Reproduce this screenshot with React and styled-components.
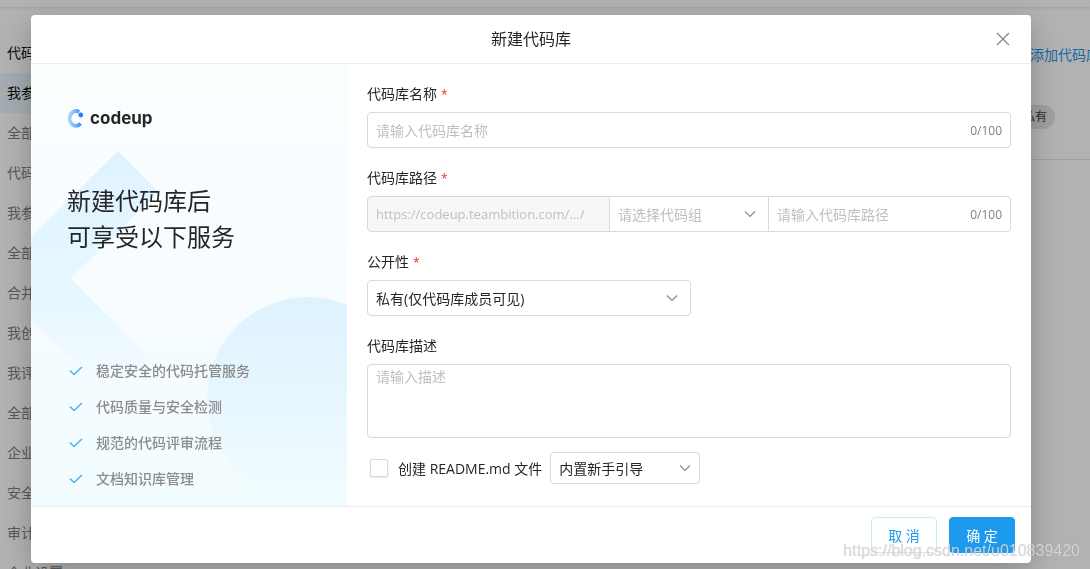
import React, { useState } from "react";
import styled, { createGlobalStyle } from "styled-components";

const GlobalStyle = createGlobalStyle`
    * {
        box-sizing: border-box;
    }
    body {
        margin: 0;
        overflow: hidden;
        background-color: #fff;
    }
    body, input, select, textarea, button {
        font-family: "Open Sans", "Noto Sans CJK SC", sans-serif;
        font-size: 14px;
        color: #262626;
    }
`;

/* page behind the dialog */
const Page = styled.div`
    display: flex;
    flex-direction: column;
    height: 100vh;
    overflow: hidden;
`;
const TopBar = styled.div`
    flex: none;
    height: 7px;
    box-shadow: 0 1px 3px rgba(0, 0, 0, 0.12);
`;
const Columns = styled.div`
    display: flex;
    flex: 1;
    min-height: 0;
`;
const SideNav = styled.nav`
    width: 220px;
    padding-top: 26px;
`;
const SideItem = styled.a`
    display: block;
    padding-left: 7px;
    line-height: 40px;
    text-decoration: none;
    color: ${({ $strong }) => ($strong ? "#111" : "#808080")};
    background-color: ${({ $active }) => ($active ? "#ebf7fe" : "transparent")};
`;
const Main = styled.main`
    flex: 1;
    margin-right: -24px;
`;
const MainHeader = styled.div`
    display: flex;
    justify-content: flex-end;
    padding: 36px 14px 0;
`;
const AddLink = styled.a`
    line-height: 24px;
    text-decoration: none;
    color: #1b9aee;
`;
const RepoRow = styled.div`
    display: flex;
    justify-content: flex-end;
    margin-top: 38px;
    padding: 0 59px 30px;
    border-bottom: 1px solid #e5e5e5;
`;
const Tag = styled.span`
    padding: 0 8px;
    border-radius: 12px;
    line-height: 24px;
    font-size: 12px;
    background-color: #e5e5e5;
    color: #404040;
`;

/* dialog */
const Mask = styled.div`
    position: fixed;
    inset: 0;
    display: flex;
    align-items: flex-start;
    padding: 15px 59px 6px 31px;
    background-color: rgba(0, 0, 0, 0.3);
`;
const Dialog = styled.form`
    flex: 1;
    border-radius: 4px;
    background-color: #fff;
    box-shadow: 0 8px 30px rgba(0, 0, 0, 0.25);
`;
const DialogHeader = styled.header`
    display: grid;
    grid-template-columns: 1fr auto 1fr;
    align-items: center;
    padding: 12px 20px;
    border-bottom: 1px solid #ececec;
`;
const DialogTitle = styled.h2`
    grid-column: 2;
    margin: 0;
    font-size: 16px;
    line-height: 24px;
    font-weight: 400;
`;
const CloseButton = styled.button`
    display: flex;
    justify-self: end;
    padding: 0;
    border: none;
    background: none;
    cursor: pointer;
`;
const DialogBody = styled.div`
    display: flex;
`;
const DialogFooter = styled.footer`
    display: flex;
    justify-content: flex-end;
    gap: 12px;
    padding: 10px 16px;
    border-top: 1px solid #ececec;
`;
const Button = styled.button`
    min-width: 66px;
    height: 36px;
    padding: 0 16px 1px;
    border: 1px solid ${({ $primary }) => ($primary ? "#1b9aee" : "#c6eafc")};
    border-radius: 4px;
    background-color: ${({ $primary }) => ($primary ? "#1b9aee" : "#fff")};
    color: ${({ $primary }) => ($primary ? "#fff" : "#1b9aee")};
    cursor: pointer;
`;

/* left promo panel */
const Promo = styled.aside`
    position: relative;
    display: flex;
    flex-direction: column;
    justify-content: space-between;
    width: 316px;
    padding: 42px 36px 9px;
    overflow: hidden;
    background: linear-gradient(#fafeff, #f7fcff 50%, #f1fcff);
`;
const PromoArt = styled.svg`
    position: absolute;
    top: 0;
    left: 0;
`;
const PromoTop = styled.div`
    position: relative;
`;
const Brand = styled.div`
    display: flex;
    align-items: center;
    gap: 5px;
    font-family: Inter, sans-serif;
    font-size: 17px;
    line-height: 24px;
    font-weight: 700;
`;
const PromoTitle = styled.h3`
    margin: 53px 0 0;
    font-size: 24px;
    line-height: 36px;
    font-weight: 400;
`;
const PromoList = styled.ul`
    position: relative;
    margin: 0;
    padding: 0;
    list-style: none;
`;
const PromoItem = styled.li`
    display: flex;
    align-items: center;
    gap: 13px;
    padding-left: 2px;
    line-height: 36px;
    font-weight: 500;
    color: #8c8c8c;
`;

/* form */
const Fields = styled.div`
    flex: 1;
    padding: 16px 20px 22px;
`;
const Field = styled.div`
    margin-bottom: ${({ $last }) => ($last ? "14px" : "16px")};
`;
const Label = styled.label`
    display: block;
    margin-bottom: 4px;
    line-height: 28px;
`;
const Required = styled.span`
    margin-left: 4px;
    font-size: 12px;
    line-height: 1;
    color: #f5301c;
`;
const InputBox = styled.div`
    display: flex;
    align-items: center;
    flex: 1;
    height: 36px;
    padding: 0 8px;
    border: 1px solid #d9d9d9;
    border-radius: ${({ $radius }) => $radius || "4px"};
    background-color: ${({ $disabled }) => ($disabled ? "#f7f7f7" : "#fff")};
`;
const Input = styled.input`
    flex: 1;
    min-width: 0;
    padding: 0;
    border: none;
    outline: none;
    background: none;
    &::placeholder {
        color: #bfbfbf;
    }
    &:disabled {
        font-size: 13px;
        color: #bfbfbf;
    }
`;
const Counter = styled.span`
    font-size: 12px;
    color: #808080;
`;
const PathGroup = styled.div`
    display: flex;
    & > * + * {
        margin-left: -1px;
    }
`;
const SelectBox = styled.div`
    display: grid;
    align-items: center;
    width: ${({ $width }) => $width};
    svg {
        grid-area: 1 / 1;
        justify-self: end;
        margin-right: ${({ $small }) => ($small ? "9px" : "13px")};
        pointer-events: none;
    }
`;
const SelectInput = styled.select`
    grid-area: 1 / 1;
    appearance: none;
    width: 100%;
    height: ${({ $small }) => ($small ? "32px" : "36px")};
    padding: 0 32px 0 8px;
    border: 1px solid #d9d9d9;
    border-radius: ${({ $square }) => ($square ? "0" : "4px")};
    background-color: #fff;
    color: ${({ $empty }) => ($empty ? "#bfbfbf" : "#262626")};
`;
const TextArea = styled.textarea`
    display: block;
    width: 100%;
    height: 74px;
    padding: 0 8px;
    border: 1px solid #d9d9d9;
    border-radius: 4px;
    line-height: 24px;
    resize: none;
    &::placeholder {
        color: #bfbfbf;
    }
`;
const ReadmeRow = styled.div`
    display: flex;
    align-items: center;
    gap: 8px;
    padding-left: 3px;
`;
const CheckLabel = styled.label`
    display: flex;
    align-items: center;
    gap: 10px;
`;
const Checkbox = styled.input`
    appearance: none;
    width: 18px;
    height: 18px;
    margin: 0;
    border: 1px solid #d9d9d9;
    border-radius: 2px;
    background-color: #fff;
    box-shadow: 0 1px 2px rgba(0, 0, 0, 0.1);
    &:checked {
        background-color: #1b9aee;
    }
`;
const Watermark = styled.div`
    position: fixed;
    right: 10px;
    bottom: 8px;
    font-family: "Liberation Sans", sans-serif;
    font-size: 16px;
    line-height: 20px;
    color: rgba(222, 222, 222, 0.85);
    text-shadow: 0 0 1px rgba(120, 120, 120, 0.4);
    pointer-events: none;
`;

const navItems = [
    { text: "代码库", strong: true },
    { text: "我参与的", strong: true, active: true },
    { text: "全部" },
    { text: "代码组" },
    { text: "我参与的" },
    { text: "全部" },
    { text: "合并请求" },
    { text: "我创建的" },
    { text: "我评审的" },
    { text: "全部" },
    { text: "企业" },
    { text: "安全" },
    { text: "审计" },
    { text: "企业设置" },
];

const services = [
    "稳定安全的代码托管服务",
    "代码质量与安全检测",
    "规范的代码评审流程",
    "文档知识库管理",
];

const Chevron = () => (
    <svg width="12" height="8" viewBox="0 0 12 8" fill="none" stroke="#8c8c8c" strokeWidth="1.2">
        <path d="M1 1.5L6 6.5L11 1.5" />
    </svg>
);

const CheckIcon = () => (
    <svg width="14" height="10" viewBox="0 0 14 10" fill="none" stroke="#4db3f5" strokeWidth="1.5">
        <path d="M1 4.5L5 8.5L13 1" />
    </svg>
);

const Logo = () => (
    <svg width="18" height="20" viewBox="0 0 18 20" fill="none">
        <defs>
            <linearGradient id="ring" x1="0" y1="0" x2="1" y2="0">
                <stop offset="0" stopColor="#a8d3fd" />
                <stop offset="0.4" stopColor="#7fbcfc" />
                <stop offset="1" stopColor="#3d94fb" />
            </linearGradient>
        </defs>
        <path d="M12.2 4A6.4 7.4 0 1 0 13.6 15.6" stroke="url(#ring)" strokeWidth="3.8" />
        <circle cx="13.8" cy="7" r="2.4" fill="#1f80ff" />
    </svg>
);

const Art = () => (
    <PromoArt width="316" height="442" viewBox="0 0 316 442" aria-hidden="true">
        <defs>
            <linearGradient id="ribbon" x1="0" y1="87" x2="0" y2="320" gradientUnits="userSpaceOnUse">
                <stop offset="0" stopColor="#dff3ff" />
                <stop offset="0.65" stopColor="#e7f7ff" />
                <stop offset="1" stopColor="#f4fcff" />
            </linearGradient>
            <linearGradient id="disc" x1="0" y1="0" x2="0" y2="1">
                <stop offset="0" stopColor="#def2fe" />
                <stop offset="0.5" stopColor="#e7f6ff" />
                <stop offset="1" stopColor="#f1fcff" />
            </linearGradient>
        </defs>
        <path d="M87 87L128 128L40 214L144 320H64L-42 214Z" fill="url(#ribbon)" />
        <circle cx="277" cy="334" r="101" fill="url(#disc)" />
    </PromoArt>
);

const Select = ({ width, children, ...props }) => (
    <SelectBox $width={width} $small={props.$small}>
        <SelectInput {...props}>{children}</SelectInput>
        <Chevron />
    </SelectBox>
);

const Background = () => (
    <Page>
        <TopBar />
        <Columns>
            <SideNav>
                {navItems.map((item, i) => (
                    <SideItem key={i} href="#" $strong={item.strong} $active={item.active}>
                        {item.text}
                    </SideItem>
                ))}
            </SideNav>
            <Main>
                <MainHeader>
                    <AddLink href="#">添加代码库</AddLink>
                </MainHeader>
                <RepoRow>
                    <Tag>私有</Tag>
                </RepoRow>
            </Main>
        </Columns>
    </Page>
);

const App = () => {
    const [name, setName] = useState("");
    const [path, setPath] = useState("");

    return (
        <>
            <GlobalStyle />
            <Background />
            <Mask>
                <Dialog role="dialog" aria-labelledby="title" onSubmit={(e) => e.preventDefault()}>
                    <DialogHeader>
                        <DialogTitle id="title">新建代码库</DialogTitle>
                        <CloseButton type="button" aria-label="关闭">
                            <svg width="16" height="16" viewBox="0 0 16 16" stroke="#8c8c8c" strokeWidth="1.4">
                                <path d="M2 2L14 14M14 2L2 14" />
                            </svg>
                        </CloseButton>
                    </DialogHeader>
                    <DialogBody>
                        <Promo>
                            <Art />
                            <PromoTop>
                                <Brand>
                                    <Logo />
                                    codeup
                                </Brand>
                                <PromoTitle>
                                    新建代码库后
                                    <br />
                                    可享受以下服务
                                </PromoTitle>
                            </PromoTop>
                            <PromoList>
                                {services.map((text) => (
                                    <PromoItem key={text}>
                                        <CheckIcon />
                                        {text}
                                    </PromoItem>
                                ))}
                            </PromoList>
                        </Promo>
                        <Fields>
                            <Field>
                                <Label htmlFor="name">
                                    代码库名称<Required>*</Required>
                                </Label>
                                <InputBox>
                                    <Input
                                        id="name"
                                        placeholder="请输入代码库名称"
                                        maxLength={100}
                                        value={name}
                                        onChange={(e) => setName(e.target.value)}
                                    />
                                    <Counter>{name.length}/100</Counter>
                                </InputBox>
                            </Field>
                            <Field>
                                <Label htmlFor="path">
                                    代码库路径<Required>*</Required>
                                </Label>
                                <PathGroup>
                                    <InputBox $disabled $radius="4px 0 0 4px">
                                        <Input disabled aria-label="地址" value="https://codeup.teambition.com/.../" />
                                    </InputBox>
                                    <Select width="160px" $square $empty aria-label="代码组">
                                        <option>请选择代码组</option>
                                    </Select>
                                    <InputBox $radius="0 4px 4px 0">
                                        <Input
                                            id="path"
                                            placeholder="请输入代码库路径"
                                            maxLength={100}
                                            value={path}
                                            onChange={(e) => setPath(e.target.value)}
                                        />
                                        <Counter>{path.length}/100</Counter>
                                    </InputBox>
                                </PathGroup>
                            </Field>
                            <Field>
                                <Label htmlFor="visibility">
                                    公开性<Required>*</Required>
                                </Label>
                                <Select width="324px" id="visibility">
                                    <option>私有(仅代码库成员可见)</option>
                                </Select>
                            </Field>
                            <Field $last>
                                <Label htmlFor="description">代码库描述</Label>
                                <TextArea id="description" placeholder="请输入描述" />
                            </Field>
                            <ReadmeRow>
                                <CheckLabel>
                                    <Checkbox type="checkbox" />
                                    创建 README.md 文件
                                </CheckLabel>
                                <Select width="150px" $small aria-label="README 模板">
                                    <option>内置新手引导</option>
                                </Select>
                            </ReadmeRow>
                        </Fields>
                    </DialogBody>
                    <DialogFooter>
                        <Button type="button">取 消</Button>
                        <Button type="submit" $primary>
                            确 定
                        </Button>
                    </DialogFooter>
                </Dialog>
            </Mask>
            <Watermark>https://blog.csdn.net/u010839420</Watermark>
        </>
    );
};
export default App;
